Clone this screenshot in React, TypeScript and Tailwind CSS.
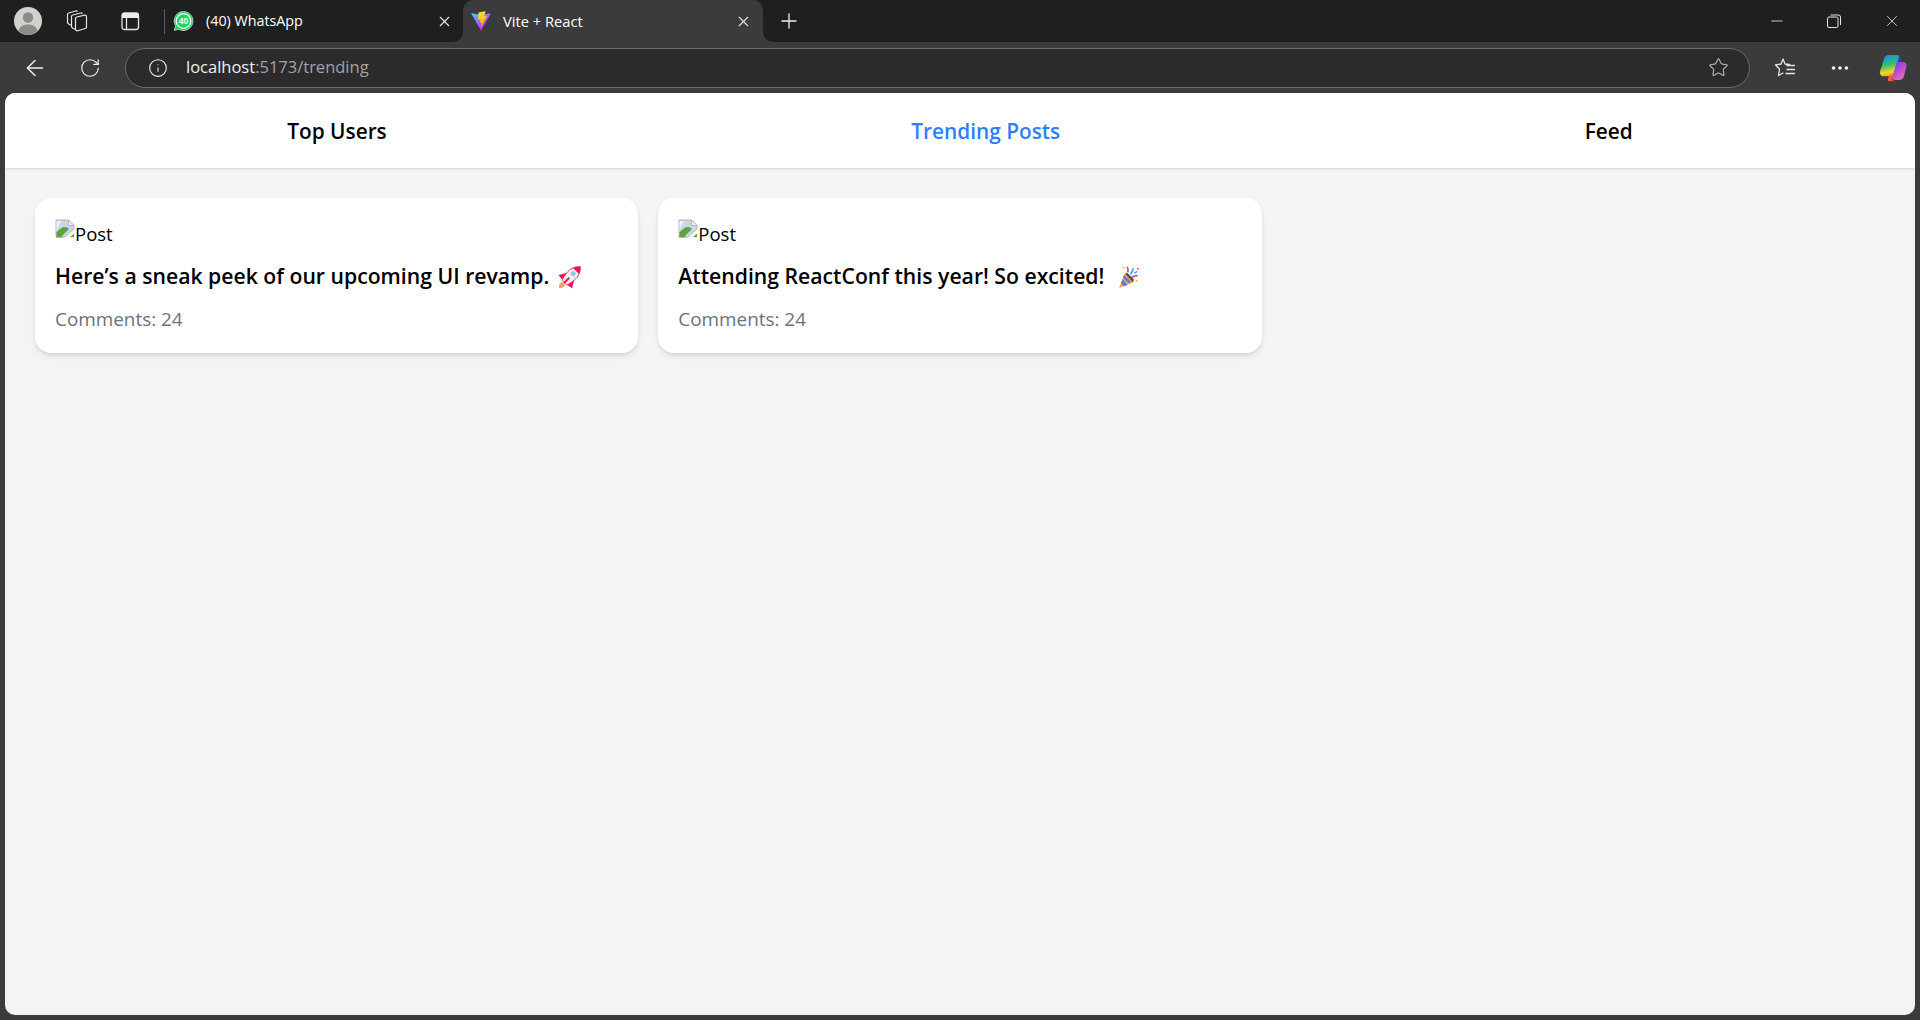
import { ArrowLeft, Info, Minus, MoreHorizontal, Plus, RotateCw, Star, X } from 'lucide-react';

const font = { fontFamily: '"Open Sans", "Noto Sans", sans-serif' };

function Avatar() {
  return (
    <svg width="28" height="28" viewBox="0 0 28 28">
      <circle cx="14" cy="14" r="14" fill="#d3d1ce" />
      <circle cx="14" cy="10.5" r="5.2" fill="#8d8b88" />
      <path d="M4.5 23.5C6 19 10 17.5 14 17.5s8 1.5 9.500 6A14 14 0 0 1 14 28a14 14 0 0 1-9.500-4.500Z" fill="#8d8b88" />
    </svg>
  );
}

function CollectionsIcon() {
  return (
    <svg width="22" height="22" viewBox="0 0 22 22" fill="none" stroke="#e6e6e6" strokeWidth="1.200">
      <path d="M9.500 8.500c0-.8.500-1.300 1.200-1.500l8-1.800c1-.2 1.800.5 1.800 1.500v10.300c0 .8-.5 1.300-1.200 1.500l-7.500 2.300c-1 .3-2.300-.5-2.300-1.500Z" />
      <path d="M9.500 19.500 6.800 18.200C6 17.800 5.500 17 5.500 16.200V6.500c0-.8.500-1.300 1.200-1.500l8-2c.7-.2 1.300.1 1.800.6" />
      <path d="M5.500 15.500 3 14.200c-.8-.4-1.500-1.200-1.500-2V4.500c0-.8.500-1.300 1.200-1.500l7-2c.7-.2 1.500 0 2 .6" />
    </svg>
  );
}

function TabsIcon() {
  return (
    <svg width="20" height="20" viewBox="0 0 20 20" fill="none">
      <rect x="2" y="2" width="16.500" height="16.500" rx="2.500" stroke="#e6e6e6" strokeWidth="1.300" />
      <path d="M6.500 7v11.500" stroke="#e6e6e6" strokeWidth="1.300" />
      <path d="M4.500 2h11.500A2.500 2.500 0 0 1 18.500 4.500V7H2V4.500A2.500 2.500 0 0 1 4.500 2Z" fill="#ececec" />
    </svg>
  );
}

function WhatsappIcon() {
  return (
    <svg width="22" height="22" viewBox="0 0 22 22">
      <path d="M11.500 1.500a9.500 9.500 0 1 1-4.800 17.700L2.200 20.500l1.300-4.500A9.500 9.500 0 0 1 11.500 1.500Z" fill="#25d366" stroke="#f2f2f2" strokeWidth="0.600" />
      <circle cx="11.500" cy="11" r="7.300" fill="none" stroke="#fff" strokeWidth="1.200" />
      <text x="11.500" y="14" textAnchor="middle" fontSize="8.500" fontWeight="700" fill="#fff" fontFamily="Liberation Sans, sans-serif">40</text>
    </svg>
  );
}

function ViteIcon() {
  return (
    <svg width="20" height="20" viewBox="0 0 410 404" fill="none">
      <path d="M399.641 59.5246L215.643 388.545C211.844 395.338 202.084 395.378 198.228 388.618L10.5817 59.5563C6.38087 52.1896 12.6802 43.2665 21.0281 44.7586L205.223 77.6824C206.398 77.8924 207.601 77.8904 208.776 77.6763L389.119 44.8058C397.439 43.2894 403.768 52.1434 399.641 59.5246Z" fill="url(#viteA)" />
      <path d="M292.965 1.5744L156.801 28.2552C154.563 28.6937 152.906 30.5903 152.771 32.8664L144.395 174.33C144.198 177.662 147.258 180.248 150.51 179.498L188.42 170.749C191.967 169.931 195.172 173.055 194.443 176.622L183.18 231.775C182.422 235.487 185.907 238.661 189.532 237.56L212.947 230.446C216.577 229.344 220.065 232.527 219.297 236.242L201.398 322.875C200.278 328.294 207.486 331.249 210.492 326.603L212.5 323.5L323.454 102.072C325.312 98.3645 322.108 94.137 318.036 94.9228L279.014 102.454C275.347 103.161 272.227 99.746 273.262 96.1583L298.731 7.86689C299.767 4.27314 296.636 0.855181 292.965 1.5744Z" fill="url(#viteB)" />
      <defs>
        <linearGradient id="viteA" x1="6" y1="33" x2="235" y2="344" gradientUnits="userSpaceOnUse">
          <stop stopColor="#41D1FF" />
          <stop offset="1" stopColor="#BD34FE" />
        </linearGradient>
        <linearGradient id="viteB" x1="194.650" y1="8.818" x2="236.076" y2="292.989" gradientUnits="userSpaceOnUse">
          <stop stopColor="#FFEA83" />
          <stop offset="0.083" stopColor="#FFDD35" />
          <stop offset="1" stopColor="#FFA800" />
        </linearGradient>
      </defs>
    </svg>
  );
}

function RestoreIcon() {
  return (
    <svg width="14" height="14" viewBox="0 0 14 14" fill="none" stroke="#e6e6e6" strokeWidth="1">
      <rect x="0.500" y="3" width="10.500" height="10.500" rx="1.500" />
      <path d="M3.500 1h8A2 2 0 0 1 13.500 3v8" />
    </svg>
  );
}

function FavoritesIcon() {
  return (
    <svg width="22" height="22" viewBox="0 0 22 22" fill="none" stroke="#e6e6e6" strokeWidth="1.300" strokeLinejoin="round" strokeLinecap="round">
      <path d="M15.500 7.500 11 7 9 2 7 7 1.500 8l4 4-1 6.500 4.500-2.500" />
      <path d="M13 8.500h7.500M13 12.500h7.500M12 16.500h8.500" />
    </svg>
  );
}

function CopilotIcon() {
  return (
    <svg width="28" height="28" viewBox="0 0 28 28">
      <defs>
        <linearGradient id="copA" x1="0.300" y1="0" x2="0.500" y2="1">
          <stop offset="0" stopColor="#1490f0" />
          <stop offset="0.450" stopColor="#2fbf6c" />
          <stop offset="0.800" stopColor="#f3d42e" />
          <stop offset="1" stopColor="#f59a1c" />
        </linearGradient>
        <linearGradient id="copB" x1="0.200" y1="0" x2="0.800" y2="1">
          <stop offset="0" stopColor="#6a48ec" />
          <stop offset="0.500" stopColor="#c24bd2" />
          <stop offset="1" stopColor="#ee7fac" />
        </linearGradient>
        <linearGradient id="copC" x1="0" y1="0" x2="1" y2="0.500">
          <stop offset="0" stopColor="#f57a2c" />
          <stop offset="1" stopColor="#ee3f6a" />
        </linearGradient>
      </defs>
      <path d="M17 .800c2.500 0 4.500 1.200 5 3l1.500 6H17Z" fill="#2340b8" />
      <path d="M10 1h8c2 0 2.300 1.700 1.500 3.500L14.500 20c-.6 1.600-1.800 2.300-3.200 2.300H5C1.800 22.300.400 20 1 17.500L5 5C5.700 2.500 7.500 1 10 1Z" fill="url(#copA)" />
      <path d="M13 24.500c.6 1.500 1.800 2.700 3.500 2.700H10c-1.500 0-1.500-1.500-.8-3l1.500-3.400h7l-1 3.400Z" fill="url(#copC)" />
      <path d="M18.500 8h5.500c2.700 0 4 1.800 3.500 4L25 22c-.7 2.500-2.500 4-5 4h-4.500c-1.500 0-2-1.200-1.500-2.700L16.500 12c.5-2 1-4 2-4Z" fill="url(#copB)" />
    </svg>
  );
}

function BrokenImage() {
  return (
    <svg width="20" height="20" viewBox="0 0 20 20" className="absolute left-0 top-0">
      <path d="M1 2h12.500L19 7.500V11L10 19H1Z" fill="#c9d7ee" stroke="#a8a8a8" strokeWidth="0.800" />
      <path d="M13.500 2v5.500H19Z" fill="#f5f5f5" stroke="#a8a8a8" strokeWidth="0.800" />
      <path d="M1.500 19v-4.500C5 10 9 8 12 9.500l2 1.500-8 8Z" fill="#5ea33c" />
      <path d="M15 19l4-3.500V19Z" fill="#5ea33c" />
      <path d="M1.500 14V3H7C4 5 2.500 9 1.500 14Z" fill="#eef3fb" />
      <path d="M1 19h7" stroke="#888" strokeWidth="0.800" />
    </svg>
  );
}

function RocketEmoji() {
  return (
    <svg width="24" height="24" viewBox="0 0 24 24" className="inline-block align-[-5px] ml-[3px]">
      <path d="M1 23c-.5-3 .8-5.500 3-6l3 3c-.5 2.300-3 3.500-6 3Z" fill="#f4a26b" />
      <g transform="rotate(45 12 12)">
        <path d="M7.500 10 2.500 18.500l5.500 1Z" fill="#e8175d" />
        <path d="M16.500 10l5 8.500-5.500 1Z" fill="#e8175d" />
        <path d="M12 -2.500c3.500 2.800 5.300 7 5.300 11.500 0 4-.8 7.500-2 11H8.700c-1.200-3.500-2-7-2-11C6.700 4.500 8.500.300 12-2.500Z" fill="#f7eef1" stroke="#e8175d" strokeWidth="0.800" />
        <path d="M12 -2.500c2 1.600 3.400 3.600 4.200 6H7.800C8.600 1.100 10 -.900 12-2.500Z" fill="#e8175d" />
        <path d="M11 13h2v7.500h-2Z" fill="#e8175d" />
        <circle cx="12" cy="7.500" r="2.400" fill="#8ec6e6" />
      </g>
    </svg>
  );
}

function PartyEmoji() {
  return (
    <svg width="24" height="24" viewBox="0 0 24 24" className="inline-block align-[-5px] ml-[8px]">
      <path d="M1 23 6.500 9l8.500 8.500Z" fill="#f2a93b" />
      <path d="M3 18l1.500-4 5 6-3.500 1.500ZM5 12.500l1-2.500 7 7-2.500 1Z" fill="#5a7fd8" />
      <path d="M7 9l2-1.500 7 7-1 3Z" fill="#6b4a3a" />
      <path d="M9 7c.5-2 0-3.500-.5-5l1.500-.5c.8 2 1 4 .5 6Z" fill="#ec2a8e" />
      <path d="M12 9c1-2.500 2-4 2.500-6l1.500.5c-.3 2-1.500 4.500-2.800 6.500Z" fill="#1fb4ea" />
      <path d="M13 12c2-1.500 4-2.200 6.500-2l.5 1.500c-2.500-.2-4.500.5-6 1.800Z" fill="#ec2a8e" />
      <path d="M16 7.500c1-.8 2-.6 2.800-1.800l1 .7c-1 1.500-2.300 1.800-3 2.300Z" fill="#1fb4ea" />
      <rect x="5" y="2" width="1.600" height="1.600" fill="#f6b73c" />
      <rect x="19" y="3" width="1.600" height="1.600" fill="#ec2a8e" />
      <rect x="18" y="15" width="1.600" height="1.600" fill="#f6b73c" />
    </svg>
  );
}

function PostCard({ text, emoji }: { text: string; emoji: React.ReactNode }) {
  return (
    <div className="bg-white rounded-2xl shadow-md p-5 h-[155px]">
      <div className="relative h-[32px] pl-[20px] pt-[2px] text-[18.500px] leading-[28px] text-black whitespace-nowrap">
        <BrokenImage />Post
      </div>
      <div className="mt-[12px] text-[21.200px] font-semibold leading-7 text-black whitespace-nowrap">
        {text} {emoji}
      </div>
      <div className="mt-[15px] text-[18.900px] leading-7 text-gray-500">Comments: 24</div>
    </div>
  );
}

export default function App() {
  return (
    <div className="h-screen w-full flex flex-col bg-[#3b3b3b] overflow-hidden" style={font}>
      {/* Tab strip */}
      <div className="flex h-[42px] shrink-0 text-white">
        <div className="flex items-center w-[463px] h-full bg-[#1f1f1f] rounded-br-[10px] pl-[14px]">
          <Avatar />
          <div className="ml-[24px]"><CollectionsIcon /></div>
          <div className="ml-[32px]"><TabsIcon /></div>
          <div className="ml-[24px] w-px h-[25px] bg-[#5c5c5c]" />
          <div className="ml-[7px]"><WhatsappIcon /></div>
          <span className="ml-[12px] text-[14.300px]">(40) WhatsApp</span>
          <X className="ml-auto mr-[10px] text-[#e6e6e6]" size={17} strokeWidth={1.500} />
        </div>
        <div className="w-[300px] h-full bg-[#1f1f1f]">
          <div className="flex items-center h-full bg-[#3b3b3b] rounded-t-[10px] pl-[8px] pr-[11px]">
            <ViteIcon />
            <span className="ml-[12px] text-[14.700px]">Vite + React</span>
            <X className="ml-auto text-[#e6e6e6]" size={17} strokeWidth={1.500} />
          </div>
        </div>
        <div className="flex items-center flex-1 h-full bg-[#1f1f1f] rounded-bl-[10px] pl-[14px]">
          <Plus className="text-[#f0f0f0]" size={24} strokeWidth={1.300} />
          <div className="ml-auto flex items-center text-[#e6e6e6]">
            <Minus className="mr-[41px]" size={18} strokeWidth={1.100} />
            <RestoreIcon />
            <X className="ml-[42px] mr-[19px]" size={18} strokeWidth={1.100} />
          </div>
        </div>
      </div>

      {/* Address bar */}
      <div className="flex items-center h-[51px] shrink-0 text-[#f0f0f0]">
        <ArrowLeft className="ml-[22px]" size={26} strokeWidth={1.300} />
        <RotateCw className="ml-[31px]" size={22} strokeWidth={1.300} />
        <div className="flex items-center ml-[24px] w-[1625px] h-[40px] rounded-full bg-[#2b2b2b] border border-[#6b6b6b] pl-[22px] pr-[20px]">
          <Info size={20} strokeWidth={1.300} />
          <span className="ml-[18px] text-[16.500px]">
            localhost<span className="text-[#a3a3a3]">:5173/trending</span>
          </span>
          <Star className="ml-auto text-[#b0b0b0]" size={21} strokeWidth={1.300} />
        </div>
        <div className="ml-[24px]"><FavoritesIcon /></div>
        <MoreHorizontal className="ml-[33px]" size={22} strokeWidth={2} />
        <div className="ml-[28px]"><CopilotIcon /></div>
      </div>

      {/* Page */}
      <div className="flex-1 mx-[5px] mb-[5px] rounded-[10px] bg-gray-100 overflow-hidden">
        <nav className="flex justify-around items-center h-[75px] pt-[2px] px-5 bg-white shadow text-[20.800px] font-semibold text-black">
          <span>Top Users</span>
          <span className="text-blue-500">Trending Posts</span>
          <span>Feed</span>
        </nav>
        <div className="grid grid-cols-3 gap-5 p-[30px]">
          <PostCard text="Here’s a sneak peek of our upcoming UI revamp." emoji={<RocketEmoji />} />
          <PostCard text="Attending ReactConf this year! So excited!" emoji={<PartyEmoji />} />
        </div>
      </div>
    </div>
  );
}
